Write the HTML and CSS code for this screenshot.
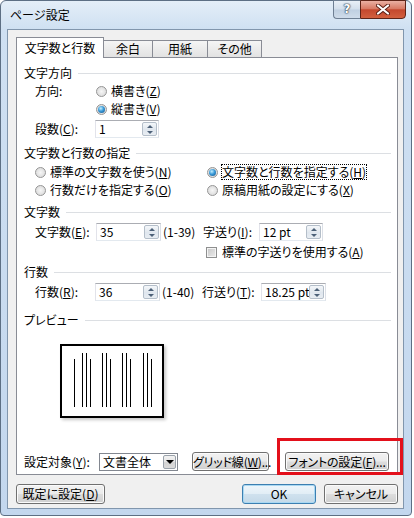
FILE: index.html
```html
<!DOCTYPE html>
<html lang="ja">
<head>
<meta charset="utf-8">
<title>ページ設定</title>
<link rel="stylesheet" href="styles.css">
</head>
<body>
<div class="window">
  <div class="titlebar">
    <div class="title">ページ設定</div>
    <div class="caption">
      <div class="cap-help">?</div>
      <div class="cap-close">
        <svg width="14" height="11" viewBox="0 0 14 11"><path d="M2 1.5 L12 9.5 M12 1.5 L2 9.5" stroke="#5a1e14" stroke-width="4" stroke-linecap="round"/><path d="M2 1.5 L12 9.5 M12 1.5 L2 9.5" stroke="#fff" stroke-width="2.2" stroke-linecap="round"/></svg>
      </div>
    </div>
  </div>
  <div class="client">
    <div class="tabs">
      <div class="tab active">文字数と行数</div>
      <div class="tab w50">余白</div>
      <div class="tab w56">用紙</div>
      <div class="tab w55">その他</div>
    </div>
    <div class="panel">
      <div class="group">文字方向</div>
      <div class="row indent mt4"><span class="lbl w61">方向:</span><span class="radio"></span><span>横書き(<u>Z</u>)</span></div>
      <div class="row indent mt4"><span class="lbl w61"></span><span class="radio on"></span><span>縦書き(<u>V</u>)</span></div>
      <div class="row tall indent mt4"><span class="lbl w60">段数(<u>C</u>):</span>
        <div class="spin w64"><span class="val">1</span><span class="spinbtn"><i class="up"></i><i class="dn"></i></span></div>
      </div>

      <div class="group mt8">文字数と行数の指定</div>
      <div class="row indent mt5">
        <div class="col1"><span class="radio"></span><span>標準の文字数を使う(<u>N</u>)</span></div>
        <div class="col2"><span class="radio on"></span><span class="focus">文字数と行数を指定する(<u>H</u>)</span></div>
      </div>
      <div class="row indent mt4">
        <div class="col1"><span class="radio"></span><span>行数だけを指定する(<u>O</u>)</span></div>
        <div class="col2"><span class="radio"></span><span>原稿用紙の設定にする(<u>X</u>)</span></div>
      </div>

      <div class="group mt8">文字数</div>
      <div class="row tall indent mt4">
        <span class="lbl w61">文字数(<u>E</u>):</span>
        <div class="spin w65"><span class="val">35</span><span class="spinbtn"><i class="up"></i><i class="dn"></i></span></div>
        <span class="range">(1-39)</span>
        <span class="lbl w56">字送り(<u>I</u>):</span>
        <div class="spin w64"><span class="val">12 pt</span><span class="spinbtn"><i class="up"></i><i class="dn"></i></span></div>
      </div>
      <div class="row indent mt4">
        <span class="lbl w171"></span><span class="check"></span><span>標準の字送りを使用する(<u>A</u>)</span>
      </div>

      <div class="group mt6">行数</div>
      <div class="row tall indent mt4">
        <span class="lbl w60">行数(<u>R</u>):</span>
        <div class="spin w65"><span class="val">36</span><span class="spinbtn"><i class="up"></i><i class="dn"></i></span></div>
        <span class="range">(1-40)</span>
        <span class="lbl w59">行送り(<u>T</u>):</span>
        <div class="spin w65"><span class="val">18.25 pt</span><span class="spinbtn"><i class="up"></i><i class="dn"></i></span></div>
      </div>

      <div class="group mt12">プレビュー</div>
      <div class="preview">
        <div class="page">
          <i class="ln s"></i>
          <i class="ln g7"></i><i class="ln g3"></i><i class="ln s g3"></i>
          <i class="ln g11"></i><i class="ln g3"></i><i class="ln s g3"></i>
          <i class="ln g11"></i><i class="ln g3"></i><i class="ln s g3"></i>
          <i class="ln g12"></i><i class="ln g3"></i><i class="ln s g3"></i>
        </div>
      </div>

      <div class="row apply">
        <span class="lbl w75">設定対象(<u>Y</u>):</span>
        <div class="select"><span class="val">文書全体</span><span class="dd"><i class="dn dark"></i></span></div>
        <div class="btn grid-btn">グリッド線(<u>W</u>)...</div>
        <div class="btn font-btn">フォントの設定(<u>F</u>)...</div>
      </div>
    </div>
    <div class="footer">
      <div class="btn foot default-set">既定に設定(<u>D</u>)</div>
      <div class="spacer"></div>
      <div class="btn foot ok">OK</div>
      <div class="btn foot cancel">キャンセル</div>
    </div>
  </div>
  <div class="highlight"></div>
</div>
</body>
</html>
```
FILE: styles.css
```css
* { box-sizing: border-box; }
body {
  margin: 0;
  background: #ffffff;
  font-family: "Noto Sans CJK JP", "Noto Sans", sans-serif;
  font-size: 12px;
  color: #000;
}
.window {
  position: relative;
  width: 412px;
  height: 516px;
  border: 1px solid #5d6f84;
  border-radius: 6px 6px 4px 4px;
  background: linear-gradient(180deg, #e4eef8 0px, #cfe0f2 28px, #c3d7ee 100%);
  padding: 0 7px 0 6px;
  display: flex;
  flex-direction: column;
}
.titlebar {
  height: 28px;
  margin: 0 -7px 0 -6px;
  display: flex;
  justify-content: space-between;
  align-items: flex-start;
}
.title {
  padding-left: 9px;
  line-height: 28px;
  font-size: 12px;
}
.caption {
  display: flex;
  margin-right: 5px;
  margin-top: -1px;
}
.cap-help {
  width: 27px;
  height: 19px;
  border: 1px solid #6e7f93;
  border-right: none;
  border-radius: 0 0 0 4px;
  background: linear-gradient(180deg, #e9f0f7 0%, #d3dfec 48%, #bfcfe1 52%, #cfdcea 100%);
  color: #fff;
  font-family: "DejaVu Sans", sans-serif;
  font-weight: bold;
  font-size: 12px;
  text-align: center;
  line-height: 17px;
  text-shadow: 0 0 1px #2d3b4c, 0 0 1px #2d3b4c, 0 0 2px #2d3b4c;
}
.cap-close {
  width: 46px;
  height: 19px;
  border: 1px solid #5e2418;
  border-radius: 0 0 4px 0;
  background: linear-gradient(180deg, #eab0a3 0%, #d87a65 45%, #c4482e 52%, #d2603f 100%);
  display: flex;
  align-items: center;
  justify-content: center;
}
.client {
  flex: 1;
  margin-bottom: 6px;
  background: #f0f0f0;
  border: 1px solid #8196ad;
  padding: 7px 5px 0 8px;
  display: flex;
  flex-direction: column;
}
.tabs {
  display: flex;
  height: 20px;
  align-items: flex-end;
}
.tab {
  height: 17px;
  width: 50px;
  border: 1px solid #898c95;
  border-bottom: none;
  margin-left: -1px;
  background: linear-gradient(180deg, #f5f5f5, #e2e2e2);
  text-align: center;
  line-height: 16px;
  font-feature-settings: "palt";
}
.tab.active {
  width: 88px;
  height: 21px;
  margin-left: 0;
  margin-bottom: -1px;
  background: #fff;
  position: relative;
  z-index: 1;
  line-height: 20px;
}
.tab.w50 { width: 50px; }
.tab.w56 { width: 56px; }
.tab.w55 { width: 55px; }
.panel {
  height: 418px;
  background: #fff;
  border: 1px solid #898c95;
  padding: 8px 6px 0 7px;
  display: flex;
  flex-direction: column;
  font-feature-settings: "palt";
}
.group {
  display: flex;
  align-items: center;
  height: 14px;
  line-height: 14px;
}
.group::after {
  content: "";
  flex: 1;
  border-top: 1px solid #dcdfe3;
  margin-left: 6px;
}
.row {
  display: flex;
  align-items: center;
  height: 14px;
  line-height: 14px;
  white-space: nowrap;
}
.row.tall { height: 18px; }
.indent { padding-left: 11px; }
.mt4 { margin-top: 4px; }
.mt5 { margin-top: 5px; }
.mt6 { margin-top: 6px; }
.mt8 { margin-top: 8px; }
.mt12 { margin-top: 12px; }
.lbl { flex: none; }
.w56 { width: 56px; }
.w59 { width: 59px; }
.w60 { width: 60px; }
.w61 { width: 61px; }
.w75 { width: 75px; }
.w171 { width: 171px; }
.col1 { width: 170px; display: flex; align-items: center; }
.col2 { display: flex; align-items: center; padding-left: 2px; }
.radio {
  position: relative;
  flex: none;
  width: 11px;
  height: 11px;
  margin-right: 4px;
  border-radius: 50%;
  border: 1px solid #959595;
  background: radial-gradient(circle at 50% 50%, #f6f6f6 0%, #e2e2e2 60%, #d6d6d6 100%);
}
.radio.on::after {
  content: "";
  position: absolute;
  left: 1px;
  top: 1px;
  width: 7px;
  height: 7px;
  border-radius: 50%;
  background: radial-gradient(circle at 40% 35%, #c4efff 0%, #3a9ad8 45%, #0e4f86 100%);
}
.check {
  flex: none;
  width: 11px;
  height: 11px;
  margin-right: 5px;
  border: 1px solid #8e8f8f;
  box-shadow: inset 0 0 0 1px #f4f4f4;
  background: linear-gradient(135deg, #c6c6c6, #ececec);
}
.focus { outline: 1px dotted #000; outline-offset: 0; }
.spin {
  flex: none;
  display: flex;
  align-items: center;
  height: 18px;
  border: 1px solid #abadb3;
  border-right-color: #dbdfe6;
  border-bottom-color: #e3e9ef;
  border-left-color: #e2e3ea;
  background: #fff;
  padding-left: 3px;
}
.spin.w64 { width: 64px; }
.spin.w65 { width: 65px; }
.val { flex: 1; }
.spinbtn {
  flex: none;
  width: 15px;
  height: 14px;
  margin-right: 1px;
  border: 1px solid #b4bec9;
  border-radius: 2px;
  background: linear-gradient(180deg, #f4f7fa 0%, #e3e9ef 48%, #b9c4d0 50%, #dfe6ee 52%, #e8edf2 100%);
  display: flex;
  flex-direction: column;
  align-items: center;
  justify-content: space-around;
}
.up {
  width: 0;
  height: 0;
  border-left: 3px solid transparent;
  border-right: 3px solid transparent;
  border-bottom: 3px solid #4d6178;
}
.dn {
  width: 0;
  height: 0;
  border-left: 3px solid transparent;
  border-right: 3px solid transparent;
  border-top: 3px solid #4d6178;
}
.dn.dark {
  border-left-width: 4px;
  border-right-width: 4px;
  border-top: 4px solid #000;
}
.range { width: 40px; margin-left: 2px; flex: none; }
.preview {
  margin-top: 17px;
  padding-left: 36px;
  height: 74px;
}
.page {
  width: 104px;
  height: 74px;
  border: 2px solid #000;
  background: #fff;
  box-shadow: 2px 2px 3px rgba(0, 0, 0, 0.22);
  display: flex;
  align-items: flex-end;
  padding: 0 0 9px 12px;
}
.ln {
  display: block;
  width: 1px;
  height: 54px;
  background: #000;
  flex: none;
}
.ln.s { height: 48px; }
.ln.g3 { margin-left: 3px; }
.ln.g7 { margin-left: 7px; }
.ln.g11 { margin-left: 11px; }
.ln.g12 { margin-left: 12px; }
.apply { margin-top: 34px; height: 19px; }
.select {
  flex: none;
  width: 79px;
  height: 18px;
  border: 1px solid #828790;
  background: #fff;
  display: flex;
  align-items: center;
  padding-left: 3px;
}
.dd {
  width: 13px;
  height: 14px;
  margin-right: 1px;
  border: 1px solid #9aa2ab;
  border-radius: 2px;
  background: linear-gradient(180deg, #f2f2f2 0%, #e6e6e6 48%, #d4d4d4 52%, #dadada 100%);
  display: flex;
  align-items: center;
  justify-content: center;
}
.btn {
  flex: none;
  height: 19px;
  border: 1px solid #707070;
  border-radius: 3px;
  background: linear-gradient(180deg, #f2f2f2 0%, #ebebeb 48%, #dddddd 52%, #cfcfcf 100%);
  box-shadow: inset 0 0 0 1px #fbfbfb;
  text-align: center;
  line-height: 17px;
  white-space: nowrap;
  letter-spacing: -0.2px;
  font-feature-settings: "palt";
}
.grid-btn { width: 77px; margin-left: 14px; }
.font-btn { width: 104px; margin-left: 16px; }
.footer {
  display: flex;
  margin-top: 9px;
}
.btn.foot { height: 20px; line-height: 18px; letter-spacing: 0; }
.default-set { width: 89px; }
.spacer { flex: 1; }
.ok {
  width: 74px;
  border-color: #3c7fb1;
  background: linear-gradient(180deg, #eef6fb 0%, #e2eef6 48%, #cfe1ee 52%, #c4d9e8 100%);
  box-shadow: inset 0 0 0 1px #a9d8f2;
}
.cancel { width: 74px; margin-left: 8px; }
.highlight {
  position: absolute;
  left: 276px;
  top: 437px;
  width: 126px;
  height: 37px;
  border: 3px solid #e3101b;
}
```
